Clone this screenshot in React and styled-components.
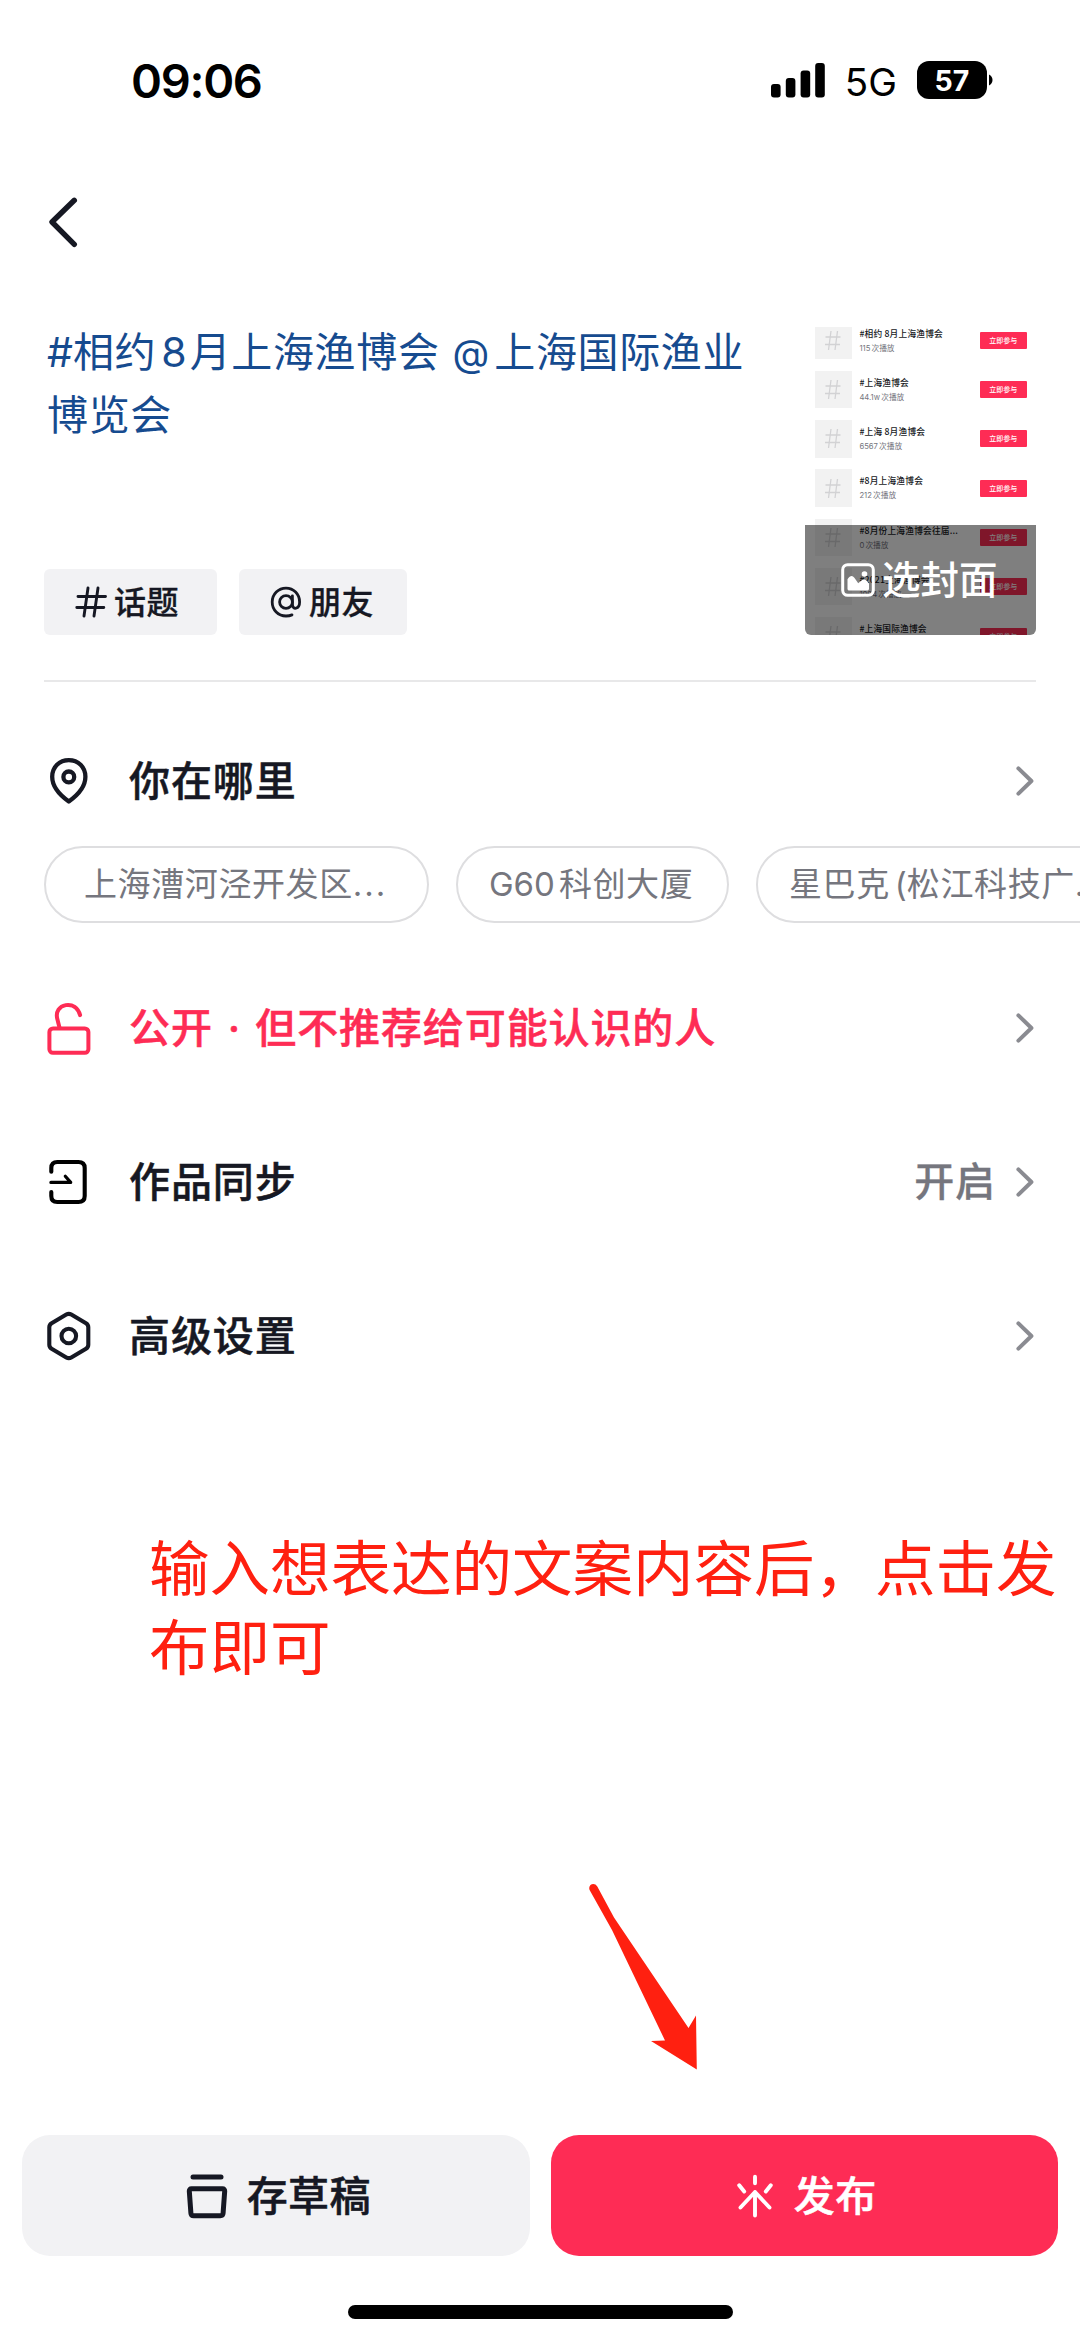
import React from 'react';
import styled, { createGlobalStyle } from 'styled-components';

const colors = {
  ink: '#161823',
  grey: '#75767e',
  chevron: '#8a8b91',
  pink: '#fe2c55',
  link: '#164b8f',
  panel: '#f2f2f4',
  marker: '#ff2010',
};

const latin = "Inter, 'Noto Sans CJK SC', sans-serif";
const cjk = "'Noto Sans CJK SC', sans-serif";

const GlobalStyle = createGlobalStyle`
  * {
    box-sizing: border-box;
  }

  body {
    margin: 0;
    background: #fff;
  }

  svg {
    display: block;
    flex: none;
  }
`;

const Screen = styled.main`
  display: flex;
  flex-direction: column;
  width: 1080px;
  height: 2341px;
  overflow: hidden;
  background: #fff;
  color: ${colors.ink};
  font-family: ${cjk};
  white-space: nowrap;
`;

const StatusBar = styled.div`
  display: flex;
  align-items: center;
  height: 160px;
  padding: 0 87px 0 131px;
  color: #000;
  font-family: ${latin};
`;

const Clock = styled.span`
  flex: 1;
  padding-top: 2px;
  font-size: 47px;
  font-weight: 600;
  line-height: 60px;
  letter-spacing: -1.3px;
`;

const Network = styled.span`
  margin: 3px 20px 0 20px;
  font-size: 38.5px;
  line-height: 48px;
`;

const Battery = styled.span`
  width: 70px;
  height: 38px;
  border-radius: 12px;
  background: #000;
  color: #fff;
  font-size: 28.5px;
  font-weight: 700;
  line-height: 39px;
  text-align: center;
`;

const NavBar = styled.div`
  display: flex;
  height: 167px;
  padding: 35px 0 0 47px;
`;

const Composer = styled.section`
  display: flex;
  justify-content: space-between;
  height: 308px;
  margin: 0 44px;
`;

const Draft = styled.div`
  display: flex;
  flex-direction: column;
  justify-content: space-between;
`;

const Caption = styled.p`
  margin: -9px 0 0;
  padding-left: 3px;
  color: ${colors.link};
  font-size: 41px;
  line-height: 62.5px;
  letter-spacing: 0.65px;
`;

const Latin = styled.span`
  margin: 0 ${props => props.$right || 0}px 0 ${props => props.$left || 0}px;
  font-family: ${latin};
  font-size: ${props => props.$size || 'inherit'};
  line-height: 1;
  letter-spacing: ${props => props.$spacing || 0}px;
`;

const TagList = styled.div`
  display: flex;
  gap: 22px;
`;

const Tag = styled.button`
  display: flex;
  align-items: center;
  gap: 7px;
  width: ${props => props.$width}px;
  height: 66px;
  padding: 0 0 0 31px;
  border: 0;
  border-radius: 6px;
  background: ${colors.panel};
  color: ${colors.ink};
  font-family: ${cjk};
  font-size: 32px;
  font-weight: 500;
  letter-spacing: 0.6px;
`;

const TagText = styled.span`
  padding-bottom: 4px;
  -webkit-text-stroke: 0.3px;
`;

const Cover = styled.div`
  position: relative;
  display: flex;
  flex-direction: column;
  width: 231px;
  height: 308px;
  overflow: hidden;
  border-radius: 6px;
`;

const TopicRow = styled.div`
  display: flex;
  flex: none;
  height: 37.4px;
  margin-bottom: 11.9px;
  padding: 0 9px 0 9.5px;

  &:first-child {
    margin-top: -5.4px;
  }
`;

const TopicTile = styled.div`
  display: flex;
  align-items: center;
  justify-content: center;
  width: 37.4px;
  background: #f2f2f2;
`;

const TopicText = styled.div`
  flex: 1;
  margin-left: 7.5px;
`;

const TopicName = styled.div`
  height: 14px;
  margin-top: 5px;
  font-size: 8.7px;
  font-weight: 500;
  line-height: 14px;
  letter-spacing: 0.2px;
`;

const TopicPlays = styled.div`
  color: ${colors.grey};
  font-family: ${latin};
  font-size: 7.7px;
  line-height: 16px;
  word-spacing: -1px;
`;

const JoinBadge = styled.div`
  width: 47.5px;
  height: 17px;
  margin-top: 10.3px;
  border-radius: 1px;
  background: ${colors.pink};
  color: #fff;
  font-size: 7px;
  font-weight: 500;
  line-height: 16px;
  text-align: center;
`;

const CoverPicker = styled.div`
  position: absolute;
  inset: auto 0 0;
  display: flex;
  align-items: center;
  gap: 7px;
  height: 110px;
  padding: 0 0 1px 36px;
  background: rgba(0, 0, 0, 0.5);
  color: #fff;
  font-size: 38.5px;
  font-weight: 500;
`;

const PickerLabel = styled.span`
  padding-bottom: 5px;
`;

const Divider = styled.hr`
  width: 992px;
  height: 2px;
  margin: 45px 44px 0;
  border: 0;
  background: #e8e8e9;
`;

const Setting = styled.div`
  display: flex;
  align-items: center;
  height: 154px;
  padding: 0 44px;
  color: ${props => props.$color || colors.ink};
  font-size: 41px;
  font-weight: 500;
  letter-spacing: 0.9px;
`;

const LocationSetting = styled(Setting)`
  height: 164px;
  padding-top: 33px;
`;

const SettingLabel = styled.span`
  flex: 1;
  margin-left: 35px;
  padding-bottom: 6px;
  line-height: 60px;
  -webkit-text-stroke: 0.5px;
`;

const SettingValue = styled.span`
  margin-right: 20px;
  padding-bottom: 6px;
  color: ${colors.grey};
  font-size: 40px;
  line-height: 60px;
  -webkit-text-stroke: 0.3px;
`;

const Places = styled.div`
  display: flex;
  gap: 27px;
  height: 105px;
  padding: 0 0 28px 44px;
`;

const Place = styled.span`
  flex: none;
  width: ${props => props.$width}px;
  height: 77px;
  padding-left: ${props => props.$inset}px;
  border: 2px solid #dedee0;
  border-radius: 39px;
  color: ${colors.grey};
  font-size: 33px;
  line-height: 69px;
  letter-spacing: 0.6px;
`;

const Note = styled.div`
  margin: 112px 0 0 149px;
  color: ${colors.marker};
  font-size: 60.5px;
  line-height: 79px;
`;

const ArrowWrap = styled.div`
  flex: 1;
  padding: 197px 0 0 585px;
`;

const Actions = styled.div`
  display: flex;
  gap: 21px;
  padding: 0 22px;
`;

const Action = styled.button`
  display: flex;
  flex: none;
  align-items: center;
  justify-content: center;
  gap: ${props => props.$gap}px;
  width: 507.5px;
  height: 121px;
  padding: 0 0 0 4px;
  border: 0;
  border-radius: 28px;
  background: ${props => props.$primary ? colors.pink : colors.panel};
  color: ${props => props.$primary ? '#fff' : colors.ink};
  font-family: ${cjk};
  font-size: 41px;
  font-weight: 500;
  letter-spacing: 0.4px;
`;

const ActionLabel = styled.span`
  padding-bottom: 6px;
  -webkit-text-stroke: 0.5px;
`;

const HomeIndicator = styled.div`
  width: 385px;
  height: 14px;
  margin: 49px auto 22px;
  border-radius: 7px;
  background: #000;
`;

const SignalIcon = () => (
  <svg width="54" height="35" viewBox="0 0 54 35">
    <rect x="0" y="21" width="9.6" height="13.5" rx="3" />
    <rect x="14.8" y="15" width="9.6" height="19.5" rx="3" />
    <rect x="29.6" y="7.5" width="9.6" height="27" rx="3" />
    <rect x="44.2" y="0" width="9.6" height="34.5" rx="3" />
  </svg>
);

const BatteryNub = () => (
  <svg width="6" height="14" viewBox="0 0 6 14">
    <path d="M2 1.5C4.2 2.5 5.5 4.5 5.5 7S4.2 11.5 2 12.5Z" />
  </svg>
);

const BackIcon = () => (
  <svg width="32" height="54" viewBox="0 0 32 54" fill="none" stroke={colors.ink} strokeWidth="5.4" strokeLinecap="round" strokeLinejoin="round">
    <path d="M27.3 5.3L5 27l22.3 22.3" />
  </svg>
);

const ChevronIcon = () => (
  <svg width="20" height="32" viewBox="0 0 20 32" fill="none" stroke={colors.chevron} strokeWidth="4" strokeLinecap="round" strokeLinejoin="round">
    <path d="M2.4 3.4L15.4 16 2.4 28.6" />
  </svg>
);

const HashIcon = () => (
  <svg width="32" height="32" viewBox="0 0 32 32" fill="none" stroke="currentColor" strokeWidth="2.9" strokeLinecap="round">
    <path d="M13 2L9 30M23 2l-4 28M3 10.5h27.5M1.8 21.5h27" />
  </svg>
);

const AtIcon = () => (
  <svg width="32" height="32" viewBox="0 0 32 32" fill="none" stroke="currentColor" strokeWidth="2.8" strokeLinecap="round">
    <circle cx="16" cy="16" r="6.4" />
    <path d="M22.4 9.8V18c0 6.5 7.2 5.4 7.2-2C29.6 7.9 23.5 2.1 16 2.1S2.2 8 2.2 16 8.2 30 16 30c2.3 0 4.2-.3 6-1.1" />
  </svg>
);

const TileHash = () => (
  <svg width="18" height="21" viewBox="0 0 18 21" fill="none" stroke="#d2d2d4" strokeWidth="1.3">
    <path d="M7 1L4.5 20M13.5 1L11 20M1.5 7h15M1 14.5h15" />
  </svg>
);

const PictureIcon = () => (
  <svg width="34" height="34" viewBox="0 0 34 34">
    <rect x="1.7" y="1.7" width="30.6" height="30.6" rx="5" fill="none" stroke="#fff" strokeWidth="3" />
    <circle cx="23.5" cy="11" r="2.8" fill="#fff" />
    <path d="M6.5 16.2c3-4.2 5.3-3.8 7.4-.7l3.3 4.8 3.6-3c1.8-1.4 3.3-1 4.8.5l2.4 2.8v5.2c0 1-.8 1.8-1.8 1.8H8.3c-1 0-1.8-.8-1.8-1.8Z" fill="#fff" />
  </svg>
);

const PinIcon = () => (
  <svg width="50" height="50" viewBox="0 0 50 50" fill="none" stroke="currentColor" strokeWidth="4.3" strokeLinejoin="round">
    <path d="M24.8 45.5C14.5 38.2 8.2 30 8.2 20.8 8.2 11 15.4 4.1 24.8 4.1s16.6 6.9 16.6 16.7c0 9.2-6.3 17.4-16.6 24.7Z" />
    <circle cx="24.8" cy="20.9" r="5.4" />
  </svg>
);

const UnlockIcon = () => (
  <svg width="50" height="54" viewBox="0 0 50 54" fill="none" stroke="currentColor" strokeWidth="4" strokeLinecap="round" strokeLinejoin="round">
    <rect x="5.4" y="27.4" width="39" height="24.4" rx="3.6" />
    <path d="M15.6 27l-2.4-9.6C11.6 10.8 15.4 5.2 21.8 4.1c6.7-1.1 12.2 2.6 14.3 10" />
  </svg>
);

const SyncIcon = () => (
  <svg width="50" height="50" viewBox="0 0 50 50" fill="none" stroke="#000" strokeWidth="4.1" strokeLinecap="round" strokeLinejoin="round">
    <path d="M7.3 14.8V11c0-4 2-6 6-6h21c4 0 6.4 2 6.4 6v28c0 4-2.4 6-6.4 6h-21c-4 0-6-2-6-6v-4" />
    <path d="M6.9 25.4h19.8l-5.4-6.2" strokeWidth="3.2" />
  </svg>
);

const HexIcon = () => (
  <svg width="50" height="50" viewBox="0 0 50 50" fill="none" stroke="currentColor" strokeWidth="4.1" strokeLinejoin="round">
    <path d="M22.3 3.6c1.5-.9 3.5-.9 5 0L42 12.2c1.5.9 2.3 2.2 2.3 4v17.6c0 1.8-.8 3.1-2.3 4L27.3 46.4c-1.5.9-3.5.9-5 0L7.6 37.8c-1.5-.9-2.3-2.2-2.3-4V16.2c0-1.8.8-3.1 2.3-4Z" />
    <circle cx="24.8" cy="25" r="7.3" />
  </svg>
);

const ArrowIcon = () => (
  <svg width="120" height="190" viewBox="585 1880 120 190" fill={colors.marker}>
    <path d="M589.6 1890C587.5 1884.5 594.5 1881.5 597.3 1886.5L614 1917.5 688.5 2028 696 2015.5 696.8 2069.5 651 2041 665 2040.5 612 1930Z" />
  </svg>
);

const DraftBoxIcon = () => (
  <svg width="44" height="46" viewBox="0 0 44 46" fill="none" stroke="currentColor" strokeWidth="5" strokeLinecap="round" strokeLinejoin="round">
    <path d="M8 3.9h28" />
    <path d="M6.5 15.7h31c1.4 0 2.3 1 2.2 2.4l-1.6 22c-.1 1.6-1.2 2.6-2.8 2.6H8.7c-1.6 0-2.7-1-2.8-2.6l-1.6-22c-.1-1.4.8-2.4 2.2-2.4Z" />
  </svg>
);

const SparkIcon = () => (
  <svg width="38" height="44" viewBox="0 0 38 44" fill="none" stroke="currentColor" strokeWidth="3.9" strokeLinecap="round" strokeLinejoin="round">
    <path d="M19 2.7v6.5M3.2 11.2l5 6.3M34.8 11.2l-5 6.3M19 41.5V18M4.5 33.5L19 18l14.5 15.5" />
  </svg>
);

const topics = [
  ['#相约 8月上海渔博会', '115 次播放'],
  ['#上海渔博会', '44.1w 次播放'],
  ['#上海 8月渔博会', '6567 次播放'],
  ['#8月上海渔博会', '212 次播放'],
  ['#8月份上海渔博会往届...', '0 次播放'],
  ['#2021上海渔博会', '1094 次播放'],
  ['#上海国际渔博会', ''],
];

const App = () => (
  <>
    <GlobalStyle />
    <Screen>
      <StatusBar>
        <Clock>09:06</Clock>
        <SignalIcon />
        <Network>5G</Network>
        <Battery>57</Battery>
        <BatteryNub />
      </StatusBar>
      <NavBar>
        <BackIcon />
      </NavBar>

      <Composer>
        <Draft>
          <Caption>
            <Latin>#</Latin>相约<Latin $left={5} $right={3}>8</Latin>月上海渔博会
            <Latin $left={13} $right={5} $size="38px">@</Latin>上海国际渔业
            <br />
            博览会
          </Caption>
          <TagList>
            <Tag $width={173}>
              <HashIcon />
              <TagText>话题</TagText>
            </Tag>
            <Tag $width={168}>
              <AtIcon />
              <TagText>朋友</TagText>
            </Tag>
          </TagList>
        </Draft>
        <Cover>
          {topics.map(([name, plays]) => (
            <TopicRow key={name}>
              <TopicTile>
                <TileHash />
              </TopicTile>
              <TopicText>
                <TopicName>{name}</TopicName>
                <TopicPlays>{plays}</TopicPlays>
              </TopicText>
              <JoinBadge>立即参与</JoinBadge>
            </TopicRow>
          ))}
          <CoverPicker>
            <PictureIcon />
            <PickerLabel>选封面</PickerLabel>
          </CoverPicker>
        </Cover>
      </Composer>
      <Divider />

      <LocationSetting>
        <PinIcon />
        <SettingLabel>你在哪里</SettingLabel>
        <ChevronIcon />
      </LocationSetting>
      <Places>
        <Place $width={385} $inset={38}>
          上海漕河泾开发区<Latin $spacing={1.9}>...</Latin>
        </Place>
        <Place $width={273} $inset={31}>
          <Latin $right={4}>G60</Latin>科创大厦
        </Place>
        <Place $width={385} $inset={31}>
          星巴克<Latin $left={5}>(</Latin>松江科技广<Latin $spacing={1.9}>...</Latin>
        </Place>
      </Places>
      <Setting $color={colors.pink}>
        <UnlockIcon />
        <SettingLabel>
          公开<Latin $left={15} $right={15}>·</Latin>但不推荐给可能认识的人
        </SettingLabel>
        <ChevronIcon />
      </Setting>
      <Setting>
        <SyncIcon />
        <SettingLabel>作品同步</SettingLabel>
        <SettingValue>开启</SettingValue>
        <ChevronIcon />
      </Setting>
      <Setting>
        <HexIcon />
        <SettingLabel>高级设置</SettingLabel>
        <ChevronIcon />
      </Setting>

      <Note>
        输入想表达的文案内容后，点击发
        <br />
        布即可
      </Note>
      <ArrowWrap>
        <ArrowIcon />
      </ArrowWrap>

      <Actions>
        <Action $gap={18}>
          <DraftBoxIcon />
          <ActionLabel>存草稿</ActionLabel>
        </Action>
        <Action $primary $gap={20}>
          <SparkIcon />
          <ActionLabel>发布</ActionLabel>
        </Action>
      </Actions>
      <HomeIndicator />
    </Screen>
  </>
);

export default App;
